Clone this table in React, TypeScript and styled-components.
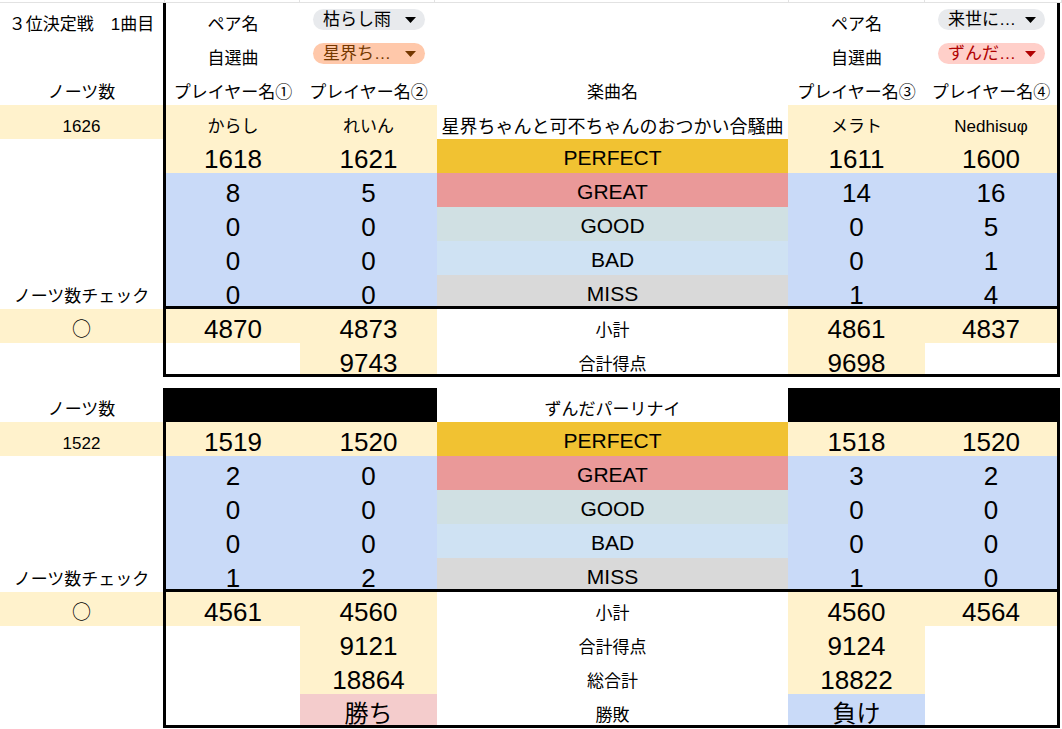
import React from 'react';
import styled, { createGlobalStyle, css } from 'styled-components';

const COLORS = {
  CREAM: '#fff2cc',
  BLUE: '#c9daf8',
  PERFECT: '#f1c232',
  GREAT: '#ea9999',
  GOOD: '#d0e0e3',
  BAD: '#cfe2f3',
  MISS: '#d9d9d9',
  WIN: '#f4cccc',
  INK: '#000000',
  GRID: '#e2e2e2',
};

const FONT_STACK = `"Liberation Sans", Arial, "Noto Sans CJK JP", sans-serif`;
const ROW_HEIGHT = 34;

type Tone = 'gray' | 'peach' | 'red';

const CHIP_TONES: Record<Tone, { bg: string; fg: string }> = {
  gray: { bg: '#e8eaed', fg: '#000000' },
  peach: { bg: '#ffc8aa', fg: '#753800' },
  red: { bg: '#ffcfc9', fg: '#b10202' },
};

const JUDGES = [
  { label: 'PERFECT', color: COLORS.PERFECT },
  { label: 'GREAT', color: COLORS.GREAT },
  { label: 'GOOD', color: COLORS.GOOD },
  { label: 'BAD', color: COLORS.BAD },
  { label: 'MISS', color: COLORS.MISS },
];

const GlobalStyle = createGlobalStyle`
  html, body {
    margin: 0;
    padding: 0;
    background: #ffffff;
  }
  * {
    box-sizing: border-box;
  }
`;

const Sheet = styled.div`
  width: 1062px;
  height: 729px;
  overflow: hidden;
  font-family: ${FONT_STACK};
  color: ${COLORS.INK};
  display: flex;
  flex-direction: column;
`;

// the few pixels of the previous row that peek out above the frozen area
const GridStrip = styled.div`
  height: 3px;
  display: flex;
  border-bottom: 1px solid ${COLORS.GRID};
`;

const GridTick = styled.div<{ $w?: number }>`
  ${(p) => (p.$w ? `width: ${p.$w}px;` : 'flex: 1;')}
  border-right: 1px solid ${COLORS.GRID};
`;

const Block = styled.div<{ $gap?: number }>`
  display: flex;
  margin-top: ${(p) => p.$gap || 0}px;
`;

const Side = styled.div`
  width: 163px;
  display: grid;
  grid-auto-rows: ${ROW_HEIGHT}px;
`;

const Frame = styled.div`
  border-left: 3px solid ${COLORS.INK};
  border-right: 3px solid ${COLORS.INK};
  display: grid;
  grid-template-columns: 134px 137px 351px 137px 132px;
  grid-auto-rows: ${ROW_HEIGHT}px;
`;

// cells sit on the bottom like a spreadsheet does by default
const Cell = styled.div<{ $bg?: string; $size?: number; $rule?: boolean }>`
  display: flex;
  align-items: flex-end;
  justify-content: center;
  min-width: 0;
  padding-bottom: calc(8px - 0.25em);
  background: ${(p) => p.$bg || 'transparent'};
  font-size: ${(p) => p.$size || 17}px;
  line-height: 1;
  white-space: nowrap;
  ${(p) =>
    p.$rule &&
    css`
      box-shadow: inset 0 -3px 0 ${COLORS.INK};
    `}
`;

const JudgeLabel = styled(Cell)`
  font-size: 21px;
  padding-bottom: 5px;
`;

const ChipCell = styled.div`
  display: flex;
  align-items: flex-end;
  padding: 0 12px 7px 13px;
`;

const Chip = styled.div<{ $tone: Tone }>`
  width: 100%;
  height: 21px;
  border-radius: 11px;
  padding: 0 9px 0 10px;
  display: flex;
  align-items: center;
  justify-content: space-between;
  font-size: 17px;
  line-height: 21px;
  white-space: nowrap;
  background: ${(p) => CHIP_TONES[p.$tone].bg};
  color: ${(p) => CHIP_TONES[p.$tone].fg};
  & svg {
    flex: none;
  }
`;

const Mark = styled.span`
  font-family: "Noto Sans CJK JP", sans-serif;
  font-size: 19px;
  line-height: 1;
  margin-bottom: 2px;
`;

function Dropdown({ text, tone }: { text: string; tone: Tone }) {
  return (
    <ChipCell>
      <Chip $tone={tone}>
        <span>{text}</span>
        <svg width="11" height="6" viewBox="0 0 11 6">
          <path d="M0 0H11L5.5 6Z" fill="currentColor" />
        </svg>
      </Chip>
    </ChipCell>
  );
}

type SideEntry = { text?: string; cream?: boolean; mark?: boolean };

function SideColumn({ entries }: { entries: SideEntry[] }) {
  return (
    <Side>
      {entries.map((e, i) => (
        <Cell key={i} $bg={e.cream ? COLORS.CREAM : undefined}>
          {e.mark ? <Mark>○</Mark> : e.text}
        </Cell>
      ))}
    </Side>
  );
}

function JudgeRows({ counts }: { counts: number[][] }) {
  return (
    <>
      {JUDGES.map((j, i) => {
        const bg = i === 0 ? COLORS.CREAM : COLORS.BLUE;
        const rule = i === JUDGES.length - 1;
        const [p1, p2, p3, p4] = counts[i];
        return (
          <React.Fragment key={j.label}>
            <Cell $bg={bg} $size={26} $rule={rule}>{p1}</Cell>
            <Cell $bg={bg} $size={26} $rule={rule}>{p2}</Cell>
            <JudgeLabel $bg={j.color} $rule={rule}>{j.label}</JudgeLabel>
            <Cell $bg={bg} $size={26} $rule={rule}>{p3}</Cell>
            <Cell $bg={bg} $size={26} $rule={rule}>{p4}</Cell>
          </React.Fragment>
        );
      })}
    </>
  );
}

function App() {
  return (
    <Sheet>
      <GlobalStyle />
      <GridStrip>
        <GridTick $w={165} />
        <GridTick $w={135} />
        <GridTick $w={135} />
        <GridTick $w={354} />
        <GridTick $w={136} />
        <GridTick />
      </GridStrip>

      {/* 1曲目 */}
      <Block>
        <SideColumn
          entries={[
            { text: '３位決定戦　1曲目' },
            {},
            { text: 'ノーツ数' },
            { text: '1626', cream: true },
            {},
            {},
            {},
            {},
            { text: 'ノーツ数チェック' },
            { mark: true, cream: true },
            {},
          ]}
        />
        <Frame>
          <Cell>ペア名</Cell>
          <Dropdown text="枯らし雨" tone="gray" />
          <Cell />
          <Cell>ペア名</Cell>
          <Dropdown text="来世に…" tone="gray" />

          <Cell>自選曲</Cell>
          <Dropdown text="星界ち…" tone="peach" />
          <Cell />
          <Cell>自選曲</Cell>
          <Dropdown text="ずんだ…" tone="red" />

          <Cell>プレイヤー名①</Cell>
          <Cell>プレイヤー名②</Cell>
          <Cell>楽曲名</Cell>
          <Cell>プレイヤー名③</Cell>
          <Cell>プレイヤー名④</Cell>

          <Cell $bg={COLORS.CREAM}>からし</Cell>
          <Cell $bg={COLORS.CREAM}>れいん</Cell>
          <Cell $size={18}>星界ちゃんと可不ちゃんのおつかい合騒曲</Cell>
          <Cell $bg={COLORS.CREAM}>メラト</Cell>
          <Cell $bg={COLORS.CREAM}>Nedhisuφ</Cell>

          <JudgeRows
            counts={[
              [1618, 1621, 1611, 1600],
              [8, 5, 14, 16],
              [0, 0, 0, 5],
              [0, 0, 0, 1],
              [0, 0, 1, 4],
            ]}
          />

          <Cell $bg={COLORS.CREAM} $size={26}>4870</Cell>
          <Cell $bg={COLORS.CREAM} $size={26}>4873</Cell>
          <Cell>小計</Cell>
          <Cell $bg={COLORS.CREAM} $size={26}>4861</Cell>
          <Cell $bg={COLORS.CREAM} $size={26}>4837</Cell>

          <Cell $rule />
          <Cell $bg={COLORS.CREAM} $size={26} $rule>9743</Cell>
          <Cell $rule>合計得点</Cell>
          <Cell $bg={COLORS.CREAM} $size={26} $rule>9698</Cell>
          <Cell $rule />
        </Frame>
      </Block>

      {/* 2曲目 */}
      <Block $gap={11}>
        <SideColumn
          entries={[
            { text: 'ノーツ数' },
            { text: '1522', cream: true },
            {},
            {},
            {},
            { text: 'ノーツ数チェック' },
            { mark: true, cream: true },
            {},
            {},
            {},
          ]}
        />
        <Frame>
          <Cell $bg={COLORS.INK} />
          <Cell $bg={COLORS.INK} />
          <Cell>ずんだパーリナイ</Cell>
          <Cell $bg={COLORS.INK} />
          <Cell $bg={COLORS.INK} />

          <JudgeRows
            counts={[
              [1519, 1520, 1518, 1520],
              [2, 0, 3, 2],
              [0, 0, 0, 0],
              [0, 0, 0, 0],
              [1, 2, 1, 0],
            ]}
          />

          <Cell $bg={COLORS.CREAM} $size={26}>4561</Cell>
          <Cell $bg={COLORS.CREAM} $size={26}>4560</Cell>
          <Cell>小計</Cell>
          <Cell $bg={COLORS.CREAM} $size={26}>4560</Cell>
          <Cell $bg={COLORS.CREAM} $size={26}>4564</Cell>

          <Cell />
          <Cell $bg={COLORS.CREAM} $size={26}>9121</Cell>
          <Cell>合計得点</Cell>
          <Cell $bg={COLORS.CREAM} $size={26}>9124</Cell>
          <Cell />

          <Cell />
          <Cell $bg={COLORS.CREAM} $size={26}>18864</Cell>
          <Cell>総合計</Cell>
          <Cell $bg={COLORS.CREAM} $size={26}>18822</Cell>
          <Cell />

          <Cell $rule />
          <Cell $bg={COLORS.WIN} $size={24} $rule>勝ち</Cell>
          <Cell $rule>勝敗</Cell>
          <Cell $bg={COLORS.BLUE} $size={24} $rule>負け</Cell>
          <Cell $rule />
        </Frame>
      </Block>
    </Sheet>
  );
}

export default App;
